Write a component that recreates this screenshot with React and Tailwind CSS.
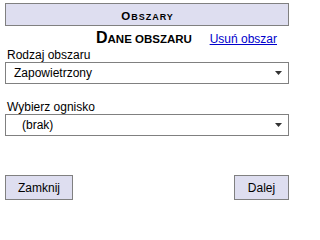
import React from "react";

function Arrow() {
  return (
    <svg width="7" height="4" viewBox="0 0 7 4" className="block">
      <path d="M0 0H7L3.5 4Z" fill="#333" />
    </svg>
  );
}

function Select({ value, indent }) {
  return (
    <div className="flex h-[22px] items-center border border-[#808080] bg-white">
      <span className={`${indent} flex-1 text-[12px] leading-none text-black`}>{value}</span>
      <span className="mr-[6px]"><Arrow /></span>
    </div>
  );
}

export default function App() {
  return (
    <div
      className="w-[299px] h-[206px] bg-white flex flex-col pl-[5px] pr-[10px] pt-[3px] text-black"
      style={{ fontFamily: '"Liberation Sans", Arial, sans-serif' }}
    >
      <div className="h-[23px] border border-[#808080] bg-[#dedef0] flex items-center justify-center">
        <span className="font-bold leading-none tracking-[1px] pl-[1px]">
          <span className="text-[11.5px]">O</span>
          <span className="text-[9px]">BSZARY</span>
        </span>
      </div>
      <div className="flex items-baseline h-[15px] mt-[4px]">
        <span className="ml-[91px] font-bold leading-none">
          <span className="text-[16px]">D</span>
          <span className="text-[11.5px]">ANE OBSZARU</span>
        </span>
        <a className="ml-auto mr-[12px] text-[12px] leading-none text-[#0000cc] underline">Usuń obszar</a>
      </div>
      <div className="text-[12px] leading-none mt-[4px] ml-[2px] h-[13px]">Rodzaj obszaru</div>
      <Select value="Zapowietrzony" indent="pl-[8px]" />
      <div className="text-[12px] leading-none mt-[17px] ml-[2px] h-[13px]">Wybierz ognisko</div>
      <Select value="(brak)" indent="pl-[16px]" />
      <div className="flex justify-between mt-[39px]">
        <button className="w-[68px] h-[25px] border border-[#808080] bg-[#dedef0] text-[12px] leading-none">Zamknij</button>
        <button className="w-[55px] h-[25px] border border-[#808080] bg-[#dedef0] text-[12px] leading-none">Dalej</button>
      </div>
    </div>
  );
}
